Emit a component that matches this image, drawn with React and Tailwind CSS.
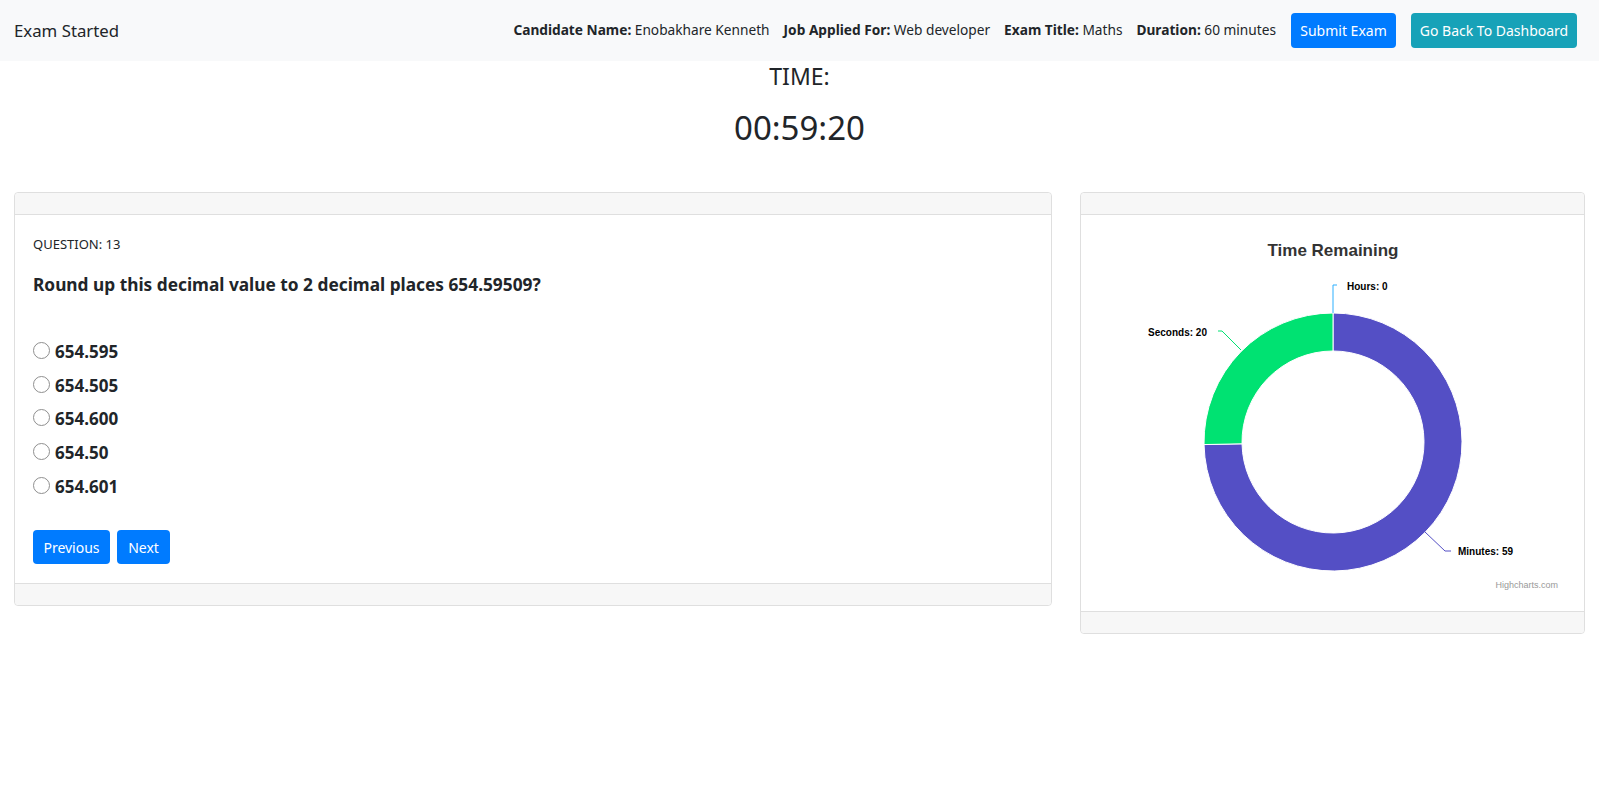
import { useState } from 'react';

const FONT = '"Noto Sans", "Open Sans", sans-serif';
const CHART_FONT = '"Liberation Sans", Arial, sans-serif';

const OPTIONS = ['654.595', '654.505', '654.600', '654.50', '654.601'];

const InfoItem = ({ label, value }) => (
  <span className="text-[13.7px] text-[#212529]">
    <b className="font-bold">{label}</b> {value}
  </span>
);

// Donut drawn the way Highcharts renders it: starts at 12 o'clock, clockwise.
const TimeChart = () => (
  <svg width="502" height="396" viewBox="0 0 502 396" style={{ fontFamily: CHART_FONT }}>
    <text x="251" y="41" textAnchor="middle" fontSize="17" fontWeight="bold" fill="#333333">
      Time Remaining
    </text>

    <path
      d="M 251 98 A 129 129 0 1 1 122.03 229.57 L 160.02 228.81 A 91 91 0 1 0 251 136 Z"
      fill="#544fc5"
      stroke="#ffffff"
      strokeWidth="1"
    />
    <path
      d="M 122.03 229.57 A 129 129 0 0 1 251 98 L 251 136 A 91 91 0 0 0 160.02 228.81 Z"
      fill="#00e272"
      stroke="#ffffff"
      strokeWidth="1"
    />

    <path d="M 255 70 L 251 70 L 251 98" fill="none" stroke="#2caffe" strokeWidth="1" />
    <path d="M 136 116 L 140 116 L 159 135" fill="none" stroke="#00e272" strokeWidth="1" />
    <path d="M 343 317 L 363 336 L 369 336" fill="none" stroke="#544fc5" strokeWidth="1" />

    <g fontSize="10" fontWeight="bold" fill="#000000" stroke="#ffffff" strokeWidth="2" paintOrder="stroke">
      <text x="265" y="75">Hours: 0</text>
      <text x="125" y="121" textAnchor="end">Seconds: 20</text>
      <text x="376" y="340">Minutes: 59</text>
    </g>

    <text x="476" y="373" textAnchor="end" fontSize="9" fill="#999999">
      Highcharts.com
    </text>
  </svg>
);

const Card = ({ children, className }) => (
  <div className={`flex flex-col rounded-[4px] border border-[#dfdfdf] bg-white ${className}`}>
    <div className="h-[22px] rounded-t-[4px] border-b border-[#dfdfdf] bg-[#f7f7f7]" />
    {children}
    <div className="h-[22px] rounded-b-[4px] border-t border-[#dfdfdf] bg-[#f7f7f7]" />
  </div>
);

export default function App() {
  const [selected, setSelected] = useState(null);

  return (
    <div className="min-h-screen bg-white text-[#212529]" style={{ fontFamily: FONT }}>
      <nav className="flex h-[61px] items-center justify-between bg-[#f8f9fa] pl-[14px] pr-[22px]">
        <span className="text-[16.8px] text-[#212529]">Exam Started</span>
        <div className="flex items-center">
          <div className="flex items-center gap-[14px]">
            <InfoItem label="Candidate Name:" value="Enobakhare Kenneth" />
            <InfoItem label="Job Applied For:" value="Web developer" />
            <InfoItem label="Exam Title:" value="Maths" />
            <InfoItem label="Duration:" value="60 minutes" />
          </div>
          <button className="ml-[15px] h-[35px] w-[105px] rounded-[4px] bg-[#007bff] text-[14px] text-white">
            Submit Exam
          </button>
          <button className="ml-[15px] h-[35px] w-[166px] rounded-[4px] bg-[#17a2b8] text-[14px] text-white">
            Go Back To Dashboard
          </button>
        </div>
      </nav>

      <div className="pt-[1px] text-center">
        <h4 className="text-[23px] leading-[29px]">TIME:</h4>
        <h2 className="mt-[18px] text-[33px] leading-[38px]">00:59:20</h2>
      </div>

      <div className="mt-[45px] flex items-start pl-[14px]">
        <Card className="w-[1038px]">
          <div className="px-[18px] pt-[19px] pb-[19px]">
            <p className="text-[13px] leading-[21px]">QUESTION: 13</p>
            <p className="mt-[16px] text-[17.3px] font-bold leading-[27px]">
              Round up this decimal value to 2 decimal places 654.59509?
            </p>
            <div className="mt-[37px] flex flex-col">
              {OPTIONS.map((opt) => (
                <label key={opt} className="flex h-[33.7px] cursor-pointer items-center">
                  <span
                    onClick={() => setSelected(opt)}
                    className={`mb-[3px] h-[17px] w-[17px] rounded-full border ${
                      selected === opt ? 'border-[5px] border-[#007bff]' : 'border-[#8f8f8f]'
                    } bg-white`}
                  />
                  <span className="ml-[5px] text-[17px] font-bold leading-[34px]">{opt}</span>
                </label>
              ))}
            </div>
            <div className="mt-[27px] flex gap-[7px]">
              <button className="h-[34px] w-[77px] rounded-[4px] bg-[#007bff] text-[14px] text-white">
                Previous
              </button>
              <button className="h-[34px] w-[53px] rounded-[4px] bg-[#007bff] text-[14px] text-white">
                Next
              </button>
            </div>
          </div>
        </Card>

        <Card className="ml-[28px] w-[505px]">
          <div className="flex h-[396px] justify-center">
            <TimeChart />
          </div>
        </Card>
      </div>
    </div>
  );
}
